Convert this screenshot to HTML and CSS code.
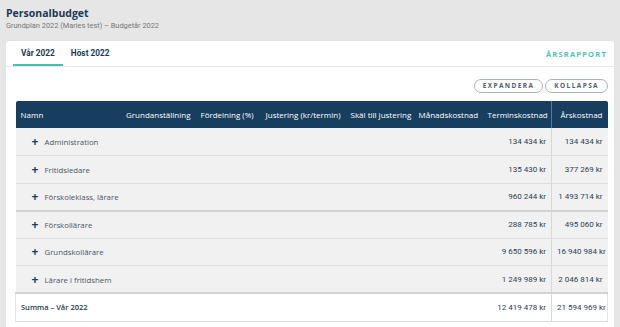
FILE: index.html
```html
<html>
<head>
<title>Personalbudget</title>
<meta charset='utf-8'/>
<link rel="stylesheet" href="styles.css">
</head>
<body>
<div class='pagehead'>
<h1>Personalbudget</h1>
<div class='sub'>Grundplan 2022 (Maries test) &ndash; Budgetår 2022</div>
</div>
<div class='card'>
<div class='tabbar'>
<a class='tab active'>Vår 2022</a>
<a class='tab'>Höst 2022</a>
<span class='spacer'></span>
<a class='report'>ÅRSRAPPORT</a>
</div>
<div class='tools'>
<button class='pill'>EXPANDERA</button>
<button class='pill'>KOLLAPSA</button>
</div>
<table class='budget'>
<colgroup>
<col style='width:105px'><col style='width:75px'><col style='width:63px'><col style='width:87px'><col style='width:68px'><col style='width:69px'><col style='width:69px'><col style='width:56px'>
</colgroup>
<thead>
<tr>
<th class='name'>Namn</th>
<th>Grundanställning</th>
<th>Fördelning (%)</th>
<th>Justering (kr/termin)</th>
<th>Skäl till justering</th>
<th>Månadskostnad</th>
<th class='split'>Terminskostnad</th>
<th>Årskostnad</th>
</tr>
</thead>
<tbody>
<tr><td class='name'><span class='plus'>+</span>Administration</td><td></td><td></td><td></td><td></td><td></td><td class='split'>134 434 kr</td><td>134 434 kr</td></tr>
<tr><td class='name'><span class='plus'>+</span>Fritidsledare</td><td></td><td></td><td></td><td></td><td></td><td class='split'>135 430 kr</td><td>377 269 kr</td></tr>
<tr class='grpend'><td class='name'><span class='plus'>+</span>Förskoleklass, lärare</td><td></td><td></td><td></td><td></td><td></td><td class='split'>960 244 kr</td><td>1 493 714 kr</td></tr>
<tr><td class='name'><span class='plus'>+</span>Förskollärare</td><td></td><td></td><td></td><td></td><td></td><td class='split'>288 785 kr</td><td>495 060 kr</td></tr>
<tr><td class='name'><span class='plus'>+</span>Grundskollärare</td><td></td><td></td><td></td><td></td><td></td><td class='split'>9 650 596 kr</td><td>16 940 984 kr</td></tr>
<tr class='grpend'><td class='name'><span class='plus'>+</span>Lärare i fritidshem</td><td></td><td></td><td></td><td></td><td></td><td class='split'>1 249 989 kr</td><td>2 046 814 kr</td></tr>
</tbody>
<tfoot>
<tr><td class='name'>Summa &ndash; Vår 2022</td><td></td><td></td><td></td><td></td><td></td><td class='split'>12 419 478 kr</td><td>21 594 969 kr</td></tr>
</tfoot>
</table>
</div>
</body>
</html>
```

FILE: styles.css
```css
body {
	margin: 0;
	background: #e6e6e6;
	font-family: "Open Sans", sans-serif;
	color: #1c3a56;
	overflow: hidden;
}
.pagehead {
	padding: 6px 6px 0 6px;
	height: 35px;
}
h1 {
	margin: 0;
	font-size: 10.5px;
	font-weight: 700;
	line-height: 14px;
	color: #1c3a56;
}
.sub {
	font-family: Roboto, sans-serif;
	font-size: 7.4px;
	color: #777;
	line-height: 11px;
}
.card {
	background: #fff;
	margin: 0 6px;
	border-radius: 3px;
	height: 300px;
	box-shadow: 0 0 1px rgba(0,0,0,0.15);
}
.tabbar {
	display: flex;
	align-items: center;
	height: 25px;
	padding: 0 7px;
	border-bottom: 1px solid #e8e8e8;
}
.tab {
	font-family: Roboto, sans-serif;
	font-weight: 700;
	font-size: 8.3px;
	color: #1c3a56;
	padding: 0 8px;
	height: 23px;
	line-height: 24px;
	border-bottom: 2px solid transparent;
}
.tab.active {
	border-bottom-color: #45bfb3;
}
.spacer {
	flex: 1;
}
.report {
	font-size: 7.5px;
	font-weight: 700;
	letter-spacing: 1.2px;
	color: #4fc1b8;
	padding-top: 1px;
}
.tools {
	display: flex;
	justify-content: flex-end;
	gap: 2px;
	padding: 12px 6px 8px 0;
}
.pill {
	font-family: "Open Sans", sans-serif;
	background: #fff;
	border: 1px solid #a9b4bf;
	border-radius: 8px;
	height: 14px;
	padding: 0 8px;
	font-size: 6.5px;
	font-weight: 700;
	letter-spacing: 1.4px;
	color: #4e5e6e;
	line-height: 12px;
}
.budget {
	margin: 0 7px 0 9px;
	border-collapse: collapse;
	table-layout: fixed;
	width: 592px;
}
.budget th, .budget td {
	white-space: nowrap;
	text-align: right;
	padding: 0 5px;
	overflow: hidden;
}
.budget th {
	background: #173e5f;
	color: #fff;
	font-weight: 400;
	font-size: 8px;
	height: 27px;
}
.budget th.split {
	border-right: 1px solid #5d7891;
}
.budget thead tr th:first-child {
	border-radius: 2px 0 0 0;
}
.budget thead tr th:last-child {
	border-radius: 0 2px 0 0;
}
.budget td {
	font-family: Roboto, sans-serif;
	font-size: 8px;
	color: #2c3e52;
	height: 27.5px;
	background: #f1f1f1;
	border-bottom: 1px solid #dedede;
}
.budget td.split {
	border-right: 1px solid #d8d8d8;
}
.budget .name {
	text-align: left;
}
.budget tbody td.name {
	padding-left: 16px;
	font-family: "Open Sans", sans-serif;
	font-size: 7.8px;
	color: #4a5563;
}
.budget tr.grpend td {
	border-bottom: 2px solid #d2d2d2;
}
.plus {
	display: inline-block;
	width: 13px;
	font-size: 12px;
	font-weight: 700;
	color: #1c3a56;
	vertical-align: -1px;
}
.budget tfoot td {
	background: #fff;
	height: 28px;
	border-bottom: 1px solid #dcdcdc;
}
.budget tfoot td.name {
	font-family: "Open Sans", sans-serif;
	font-weight: 600;
	font-size: 7.5px;
	color: #1c3a56;
}
.budget tfoot td:first-child {
	border-left: 1px solid #e4e4e4;
}
.budget tfoot td:last-child {
	border-right: 1px solid #e4e4e4;
}
```
